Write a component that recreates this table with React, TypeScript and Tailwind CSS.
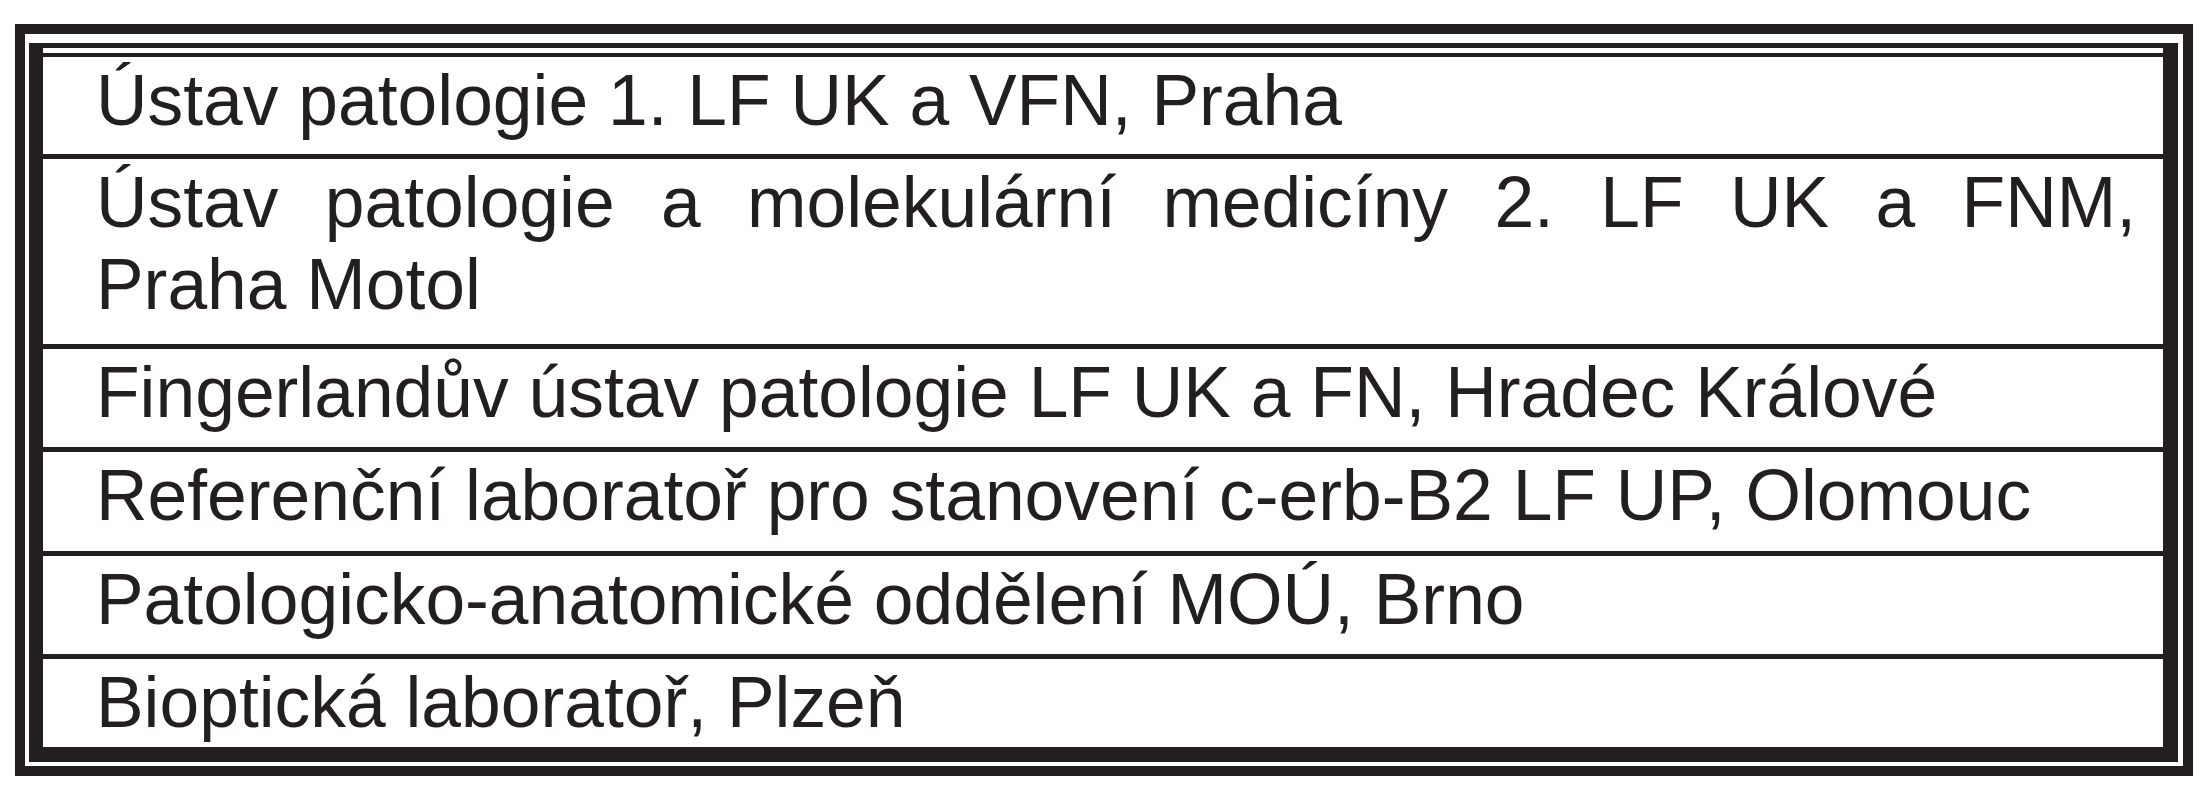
const rows = [
  { text: "Ústav patologie 1. LF UK a VFN, Praha", h: "h-[97px]" },
  { text: "", h: "h-[183px]" },
  { text: "Fingerlandův ústav patologie LF UK a FN, Hradec Králové", h: "h-[96px]" },
  { text: "Referenční laboratoř pro stanovení c-erb-B2 LF UP, Olomouc", h: "h-[97px]" },
  { text: "Patologicko-anatomické oddělení MOÚ, Brno", h: "h-[96px]" },
  { text: "Bioptická laboratoř, Plzeň", h: "h-[97px]" },
];

export default function App() {
  return (
    <div className="w-[2212px] h-[800px] bg-white pt-[24px] pl-[15px] font-['Liberation_Sans',Arial,sans-serif] text-[#231f20]">
      {/* outer frame */}
      <div className="w-[2178px] h-[752px] border-[10px] border-[#231f20] pt-[9px] pl-[4px] pr-[5px] pb-[4px]">
        {/* inner heavy frame */}
        <div className="h-full border-[#231f20] border-l-[14px] border-r-[15px] border-b-[15px] border-t-[5px] pt-[5px]">
          <div className="flex flex-col border-t-[4px] border-[#231f20]">
            {rows.map((row, i) => (
              <div
                key={i}
                className={`${row.h} pl-[53px] pr-[27px] pt-[2px] text-[71.4px] leading-[82px] ${
                  i > 0 ? "border-t-[5px] border-[#231f20] box-content" : ""
                }`}
              >
                {i === 1 ? (
                  <>
                    <div className="text-justify [text-align-last:justify]">
                      Ústav patologie a molekulární medicíny 2. LF UK a FNM,
                    </div>
                    <div>Praha Motol</div>
                  </>
                ) : (
                  <div className="whitespace-nowrap">{row.text}</div>
                )}
              </div>
            ))}
          </div>
        </div>
      </div>
    </div>
  );
}
